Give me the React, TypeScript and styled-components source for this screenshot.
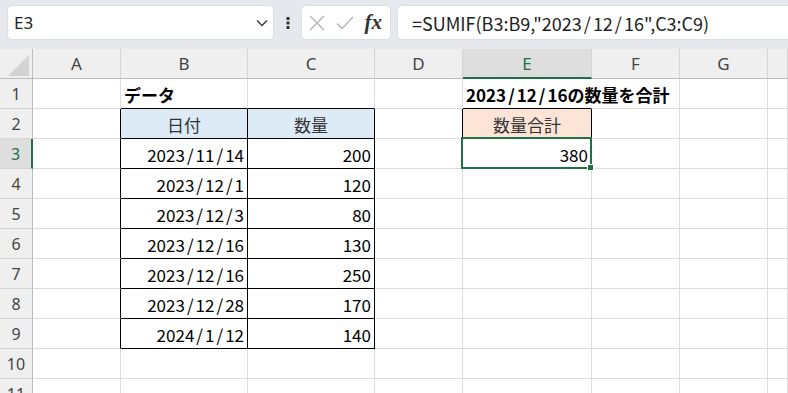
import React from 'react';
import styled, { createGlobalStyle } from 'styled-components';

const GlobalStyle = createGlobalStyle`
  html, body { margin: 0; padding: 0; background: #fff; }
  body { font-family: "Noto Sans CJK JP", "Noto Sans", sans-serif; overflow: hidden; }
`;

const GREEN = '#1e7145';
const GRID = '#dcdcdc';

const Page = styled.div`
  width: 788px;
  height: 393px;
  overflow: hidden;
  display: flex;
  flex-direction: column;
`;

const Toolbar = styled.div`
  flex: none;
  height: 49px;
  box-sizing: border-box;
  background: #e6e8ee;
  display: flex;
  align-items: flex-start;
  padding: 5px 0 0 7px;
`;

const Box = styled.div`
  height: 35px;
  box-sizing: border-box;
  background: #fff;
  border: 1px solid #dcdfe5;
  border-radius: 5px;
  display: flex;
  align-items: center;
`;

const NameBox = styled(Box)`
  width: 267px;
  justify-content: space-between;
  padding: 0 5px 0 6px;
  font-family: "Noto Sans", sans-serif;
  font-size: 17px;
  color: #222;
`;

const Dots = styled.div`
  width: 27px;
  height: 35px;
  display: flex;
  align-items: center;
  justify-content: center;
`;

const FxBox = styled(Box)`
  width: 90px;
  padding: 0 5px 0 7px;
  justify-content: space-between;
`;

const FxLabel = styled.span`
  font-family: "Liberation Serif", "DejaVu Serif", serif;
  font-style: italic;
  font-weight: bold;
  font-size: 21px;
  color: #333;
  line-height: 1;
  padding-right: 3px;
`;

const FormulaBox = styled(Box)`
  flex: 1;
  margin-left: 6px;
  border-right: none;
  border-radius: 5px 0 0 5px;
  padding-left: 14px;
  font-family: "Noto Sans CJK JP", sans-serif;
  font-size: 18px;
  color: #222;
  white-space: nowrap;
`;

const Slash = styled.span`
  margin: 0 2px;
`;

const Sheet = styled.div`
  flex: 1;
  display: grid;
  grid-template-columns: 33px 88px 127px 127px 88px 129px 88px 88px 1fr;
  grid-auto-rows: 30px;
`;

const HeaderCell = styled.div<{ $sel?: boolean }>`
  box-sizing: border-box;
  background: ${(p) => (p.$sel ? '#dedede' : '#efefef')};
  border-right: 1px solid #d4d4d4;
  border-bottom: ${(p) => (p.$sel ? `2px solid ${GREEN}` : '1px solid #bdbdbd')};
  display: flex;
  align-items: center;
  justify-content: center;
  font-family: "Noto Sans", sans-serif;
  font-size: 17px;
  color: ${(p) => (p.$sel ? GREEN : '#444')};
`;

const Corner = styled.div`
  box-sizing: border-box;
  background: #efefef;
  border-right: 1px solid #bdbdbd;
  border-bottom: 1px solid #bdbdbd;
  display: flex;
  align-items: flex-end;
  justify-content: flex-end;
  padding: 0 3px 2px 0;
`;

const RowHead = styled.div<{ $sel?: boolean }>`
  box-sizing: border-box;
  background: ${(p) => (p.$sel ? '#dedede' : '#efefef')};
  border-right: ${(p) => (p.$sel ? `2px solid ${GREEN}` : '1px solid #bdbdbd')};
  border-bottom: 1px solid #d4d4d4;
  display: flex;
  align-items: center;
  justify-content: center;
  font-family: "Noto Sans", sans-serif;
  font-size: 16px;
  color: ${(p) => (p.$sel ? GREEN : '#444')};
`;

type Align = 'left' | 'center' | 'right';

const Cell = styled.div<{ $align?: Align; $bg?: string; $rb?: string; $bb?: string; $bold?: boolean; $z?: number }>`
  position: relative;
  box-sizing: border-box;
  background: ${(p) => p.$bg || '#fff'};
  border-right: 1px solid ${(p) => p.$rb || GRID};
  border-bottom: 1px solid ${(p) => p.$bb || GRID};
  display: flex;
  align-items: center;
  justify-content: ${(p) => (p.$align === 'right' ? 'flex-end' : p.$align === 'center' ? 'center' : 'flex-start')};
  padding: 1px 3px 0 3px;
  font-family: "Noto Sans CJK JP", sans-serif;
  font-size: 17px;
  font-weight: ${(p) => (p.$bold ? 700 : 400)};
  color: ${(p) => (p.$align === 'center' ? '#333' : '#000')};
  white-space: nowrap;
  overflow: visible;
  z-index: ${(p) => p.$z ?? 1};
`;

const Selection = styled.div`
  position: absolute;
  top: -2px;
  left: -2px;
  right: -1px;
  bottom: -1px;
  border: 2px solid ${GREEN};
  pointer-events: none;
`;

const FillHandle = styled.div`
  position: absolute;
  right: -4px;
  bottom: -4px;
  width: 5px;
  height: 5px;
  background: ${GREEN};
  border: 1px solid #fff;
`;

type CellSpec = {
  text?: string;
  align?: Align;
  bg?: string;
  rb?: string;
  bb?: string;
  bold?: boolean;
  sel?: boolean;
  z?: number;
};

const BLACK = '#000';
const BLUE = '#ddebf7';
const PEACH = '#fce4d6';

const cols = ['A', 'B', 'C', 'D', 'E', 'F', 'G', ''];

const tableData: [string, string][] = [
  ['2023/11/14', '200'],
  ['2023/12/1', '120'],
  ['2023/12/3', '80'],
  ['2023/12/16', '130'],
  ['2023/12/16', '250'],
  ['2023/12/28', '170'],
  ['2024/1/12', '140'],
];

function buildRow(r: number): CellSpec[] {
  const row: CellSpec[] = cols.map(() => ({}));
  if (r === 1) {
    row[1] = { text: 'データ', bold: true, bb: BLACK };
    row[2] = { bb: BLACK };
    row[4] = { text: '2023/12/16の数量を合計', bold: true, bb: BLACK, rb: '#fff', z: 3 };
  }
  if (r >= 2 && r <= 9) row[0] = { rb: BLACK };
  if (r === 2) {
    row[1] = { text: '日付', align: 'center', bg: BLUE, rb: BLACK, bb: BLACK };
    row[2] = { text: '数量', align: 'center', bg: BLUE, rb: BLACK, bb: BLACK };
    row[3] = { rb: BLACK };
    row[4] = { text: '数量合計', align: 'center', bg: PEACH, rb: BLACK, bb: BLACK };
  }
  if (r >= 3 && r <= 9) {
    const [d, q] = tableData[r - 3];
    row[1] = { text: d, align: 'right', rb: BLACK, bb: BLACK };
    row[2] = { text: q, align: 'right', rb: BLACK, bb: BLACK };
  }
  if (r === 3) row[4] = { text: '380', align: 'right', sel: true, z: 2 };
  return row;
}

function withSlashes(text: string) {
  const parts = text.split('/');
  return parts.map((p, i) => (
    <React.Fragment key={i}>
      {i > 0 && <Slash>/</Slash>}
      {p}
    </React.Fragment>
  ));
}

const rows = Array.from({ length: 11 }, (_, i) => i + 1);

const Chevron = () => (
  <svg width="12" height="8" viewBox="0 0 12 8">
    <path d="M1 1.5 L6 6.5 L11 1.5" fill="none" stroke="#333" strokeWidth="1.3" />
  </svg>
);

const DotsIcon = () => (
  <svg width="4" height="12" viewBox="0 0 4 12">
    <rect x="0.5" y="0" width="3" height="3" fill="#333" />
    <rect x="0.5" y="4.5" width="3" height="3" fill="#333" />
    <rect x="0.5" y="9" width="3" height="3" fill="#333" />
  </svg>
);

const XIcon = () => (
  <svg width="16" height="16" viewBox="0 0 16 16">
    <path d="M1 1 L15 15 M15 1 L1 15" fill="none" stroke="#b3b3b3" strokeWidth="1.3" />
  </svg>
);

const CheckIcon = () => (
  <svg width="18" height="14" viewBox="0 0 18 14">
    <path d="M1 7.5 L6 12.5 L17 1" fill="none" stroke="#b3b3b3" strokeWidth="1.3" />
  </svg>
);

const CornerIcon = () => (
  <svg width="21" height="21" viewBox="0 0 21 21">
    <polygon points="0,21 21,21 21,0" fill="#d3d3d3" />
  </svg>
);

export default function App() {
  return (
    <Page>
      <GlobalStyle />
      <Toolbar>
        <NameBox>
          <span>E3</span>
          <Chevron />
        </NameBox>
        <Dots>
          <DotsIcon />
        </Dots>
        <FxBox>
          <XIcon />
          <CheckIcon />
          <FxLabel>fx</FxLabel>
        </FxBox>
        <FormulaBox>{withSlashes('=SUMIF(B3:B9,"2023/12/16",C3:C9)')}</FormulaBox>
      </Toolbar>
      <Sheet>
        <Corner>
          <CornerIcon />
        </Corner>
        {cols.map((c, i) => (
          <HeaderCell key={'h' + i} $sel={c === 'E'}>
            {c}
          </HeaderCell>
        ))}
        {rows.map((r) => (
          <React.Fragment key={r}>
            <RowHead $sel={r === 3}>{r}</RowHead>
            {buildRow(r).map((cell, ci) => (
              <Cell
                key={ci}
                $align={cell.align}
                $bg={cell.bg}
                $rb={cell.rb}
                $bb={cell.bb}
                $bold={cell.bold}
                $z={cell.z}
              >
                {cell.text ? withSlashes(cell.text) : null}
                {cell.sel && (
                  <Selection>
                    <FillHandle />
                  </Selection>
                )}
              </Cell>
            ))}
          </React.Fragment>
        ))}
      </Sheet>
    </Page>
  );
}
